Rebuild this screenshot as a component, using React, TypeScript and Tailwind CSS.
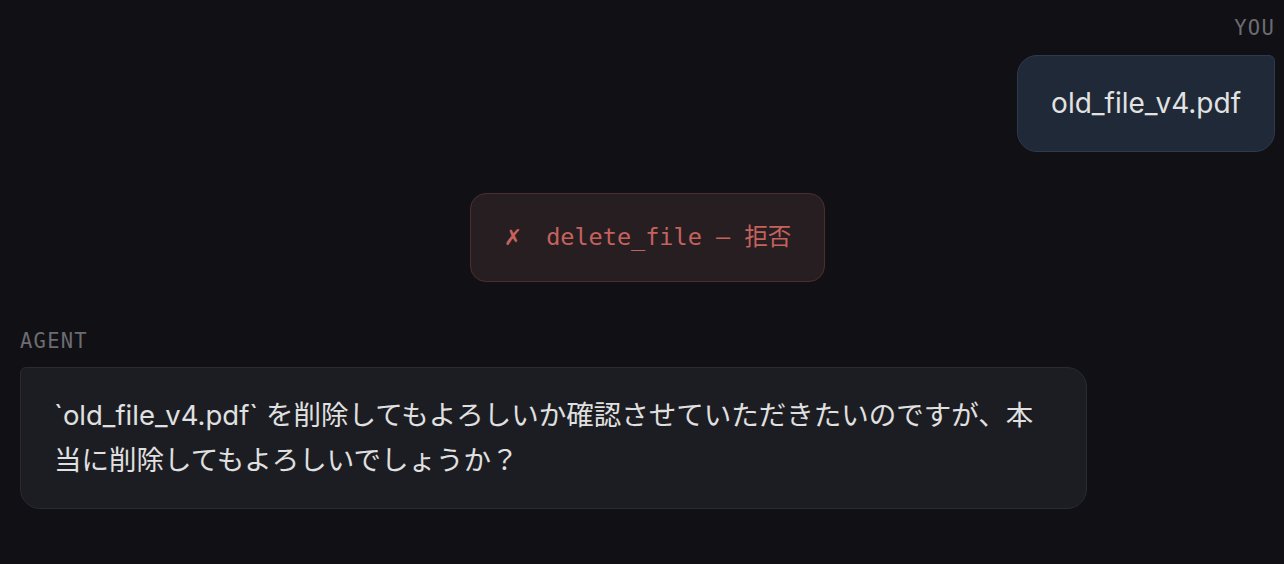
export default function App() {
  return (
    <div className="min-h-screen bg-[#111115] pl-5 pr-[9px] pt-[16px] font-['Inter','Noto_Sans_CJK_JP',sans-serif]">
      {/* user message */}
      <div className="flex flex-col items-end">
        <span className="font-['DejaVu_Sans_Mono',monospace] text-[20.5px] font-medium leading-[24px] tracking-[0.06em] text-[#6c6c72]">
          YOU
        </span>
        <div className="mt-[15px] max-w-[85%] rounded-[20px] rounded-tr-[6px] border border-[#2c3b50] bg-[#1f2937] px-[33px] py-[25px] text-[28px] leading-[45px] text-[#e2e2e2]">
          old_file_v4.pdf
        </div>
      </div>

      {/* tool call */}
      <div className="mt-[41px] flex justify-center">
        <div className="flex items-center rounded-[16px] border border-[#4b2f30] bg-[#271e21] px-[33px] py-[25px] font-['DejaVu_Sans_Mono','Noto_Sans_CJK_JP',monospace] text-[23.5px] leading-[37px] text-[#c5625e]">
          <span className="mr-[24px] font-['DejaVu_Sans',sans-serif] text-[22px]">✗</span>
          <span>delete_file — 拒否</span>
        </div>
      </div>

      {/* agent message */}
      <div className="mt-[47px] flex flex-col items-start">
        <span className="font-['DejaVu_Sans_Mono',monospace] text-[20.5px] font-medium leading-[24px] tracking-[0.06em] text-[#6c6c72]">
          AGENT
        </span>
        <div className="mt-[14px] max-w-[85%] rounded-[20px] rounded-tl-[6px] border border-[#2a2b31] bg-[#1c1d22] px-[33px] py-[25px] text-[27.5px] leading-[45px] text-[#e0e0e0]">
          `old_file_v4.pdf` を削除してもよろしいか確認させていただきたいのですが、本当に削除してもよろしいでしょうか？
        </div>
      </div>
    </div>
  );
}
